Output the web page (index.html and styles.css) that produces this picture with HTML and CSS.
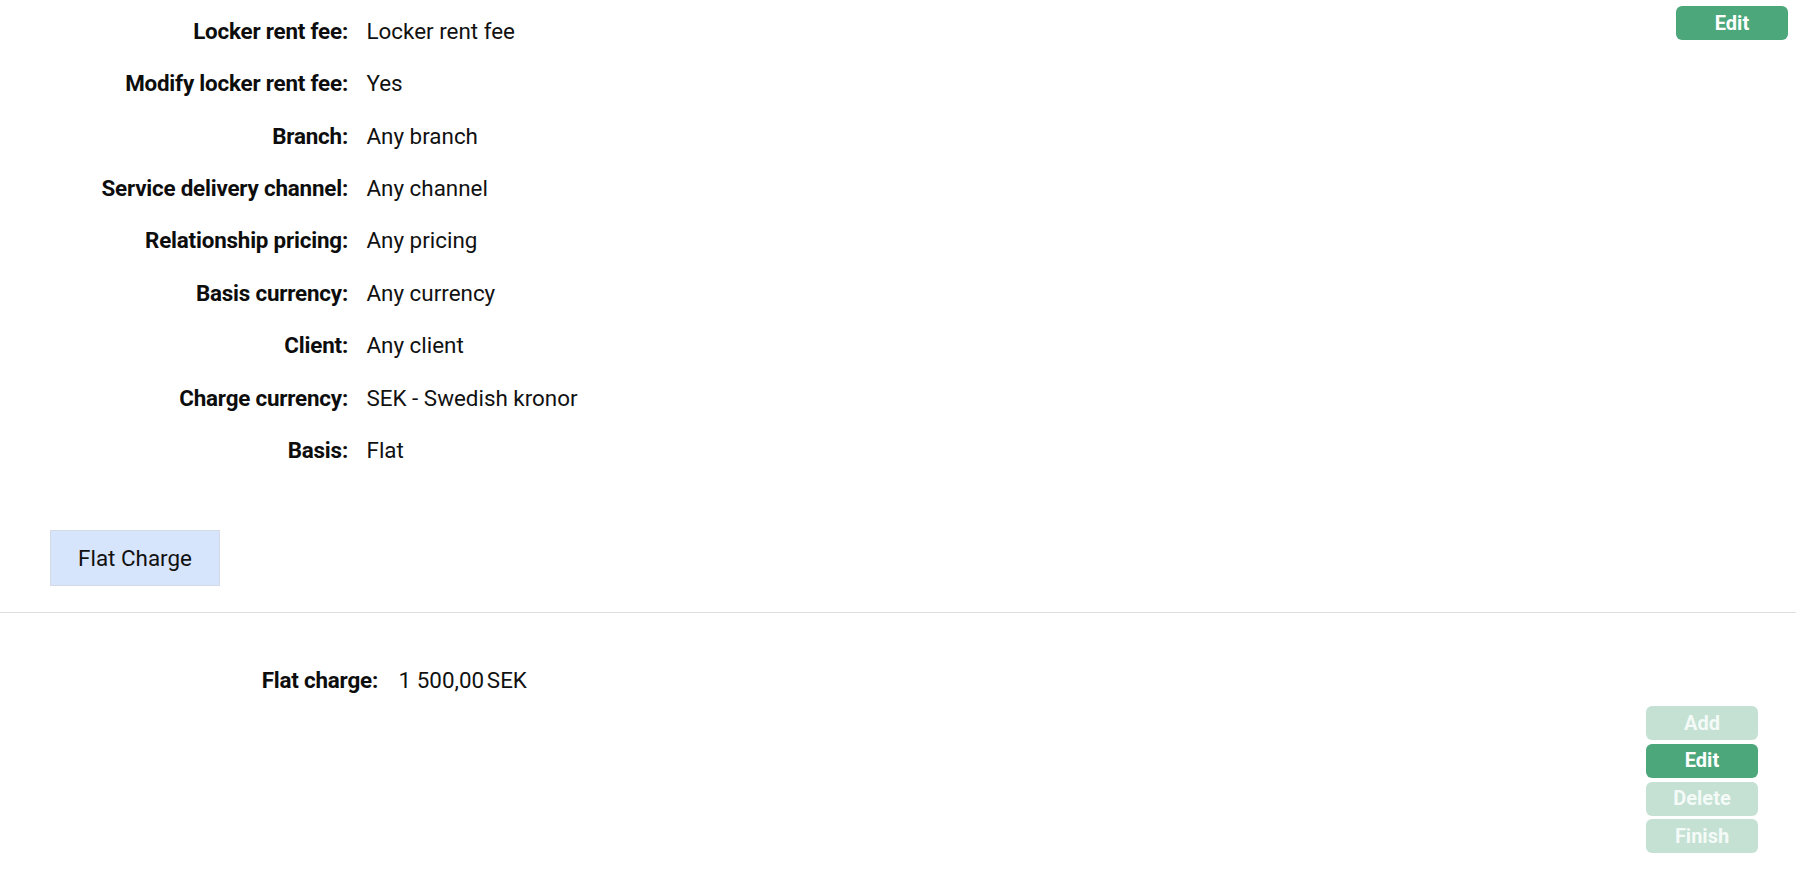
FILE: index.html
```html
<!DOCTYPE html>
<html lang="en">
<head>
<meta charset="utf-8">
<title>Locker rent fee</title>
<link rel="stylesheet" href="styles.css">
</head>
<body>
<div class="top">
  <dl class="details">
    <dt>Locker rent fee:</dt><dd>Locker rent fee</dd>
    <dt>Modify locker rent fee:</dt><dd>Yes</dd>
    <dt>Branch:</dt><dd>Any branch</dd>
    <dt>Service delivery channel:</dt><dd>Any channel</dd>
    <dt>Relationship pricing:</dt><dd>Any pricing</dd>
    <dt>Basis currency:</dt><dd>Any currency</dd>
    <dt>Client:</dt><dd>Any client</dd>
    <dt>Charge currency:</dt><dd>SEK - Swedish kronor</dd>
    <dt>Basis:</dt><dd>Flat</dd>
  </dl>
  <button class="btn btn-top">Edit</button>
</div>

<div class="tabs">
  <div class="tab">Flat Charge</div>
</div>

<div class="section">
  <dl class="details charge">
    <dt>Flat charge:</dt><dd>1 500,00&#8239;SEK</dd>
  </dl>
  <div class="actions">
    <button class="btn btn-disabled">Add</button>
    <button class="btn">Edit</button>
    <button class="btn btn-disabled">Delete</button>
    <button class="btn btn-disabled">Finish</button>
  </div>
</div>
</body>
</html>
```

FILE: styles.css
```css
html, body {
  margin: 0;
  padding: 0;
  background: #ffffff;
}

body {
  font-family: Roboto, "Open Sans", "Liberation Sans", sans-serif;
  font-size: 22.4px;
  color: #111111;
}

.top {
  display: flex;
  justify-content: space-between;
  align-items: flex-start;
}

.details {
  display: grid;
  grid-template-columns: 348px auto;
  grid-auto-rows: 52.4px;
  column-gap: 18.5px;
  margin: 0;
  padding-top: 4.6px;
  align-items: center;
}

.details dt {
  font-weight: 700;
  text-align: right;
  color: #0d0d0d;
  letter-spacing: -0.2px;
}

.details dd {
  margin: 0;
  font-weight: 400;
  color: #111111;
}

.btn {
  display: flex;
  align-items: center;
  justify-content: center;
  width: 112px;
  height: 34px;
  border: none;
  border-radius: 6px;
  background: #4ca77b;
  color: #ffffff;
  font-family: Roboto, "Open Sans", "Liberation Sans", sans-serif;
  font-size: 20px;
  font-weight: 700;
  padding: 0 0 1px 0;
  cursor: pointer;
}

.btn-disabled {
  background: #c4e1d3;
  color: #f4faf7;
  cursor: default;
}

.btn-top {
  margin: 6px 8px 0 0;
}

.tabs {
  margin-top: 53.8px;
  padding: 0 0 26px 50px;
  border-bottom: 1px solid #dedede;
}

.tab {
  display: flex;
  align-items: center;
  justify-content: center;
  box-sizing: border-box;
  width: 170px;
  height: 56px;
  background: #d6e4fc;
  border: 1px solid #d4dbe6;
  color: #111111;
}

.section {
  display: flex;
  flex-direction: column;
  padding-top: 41px;
}

.details.charge {
  grid-template-columns: 378px auto;
  column-gap: 20.6px;
  padding-top: 0;
}

.actions {
  display: flex;
  flex-direction: column;
  align-items: flex-end;
  gap: 3.7px;
  margin: 0 38px 0 0;
}
```
